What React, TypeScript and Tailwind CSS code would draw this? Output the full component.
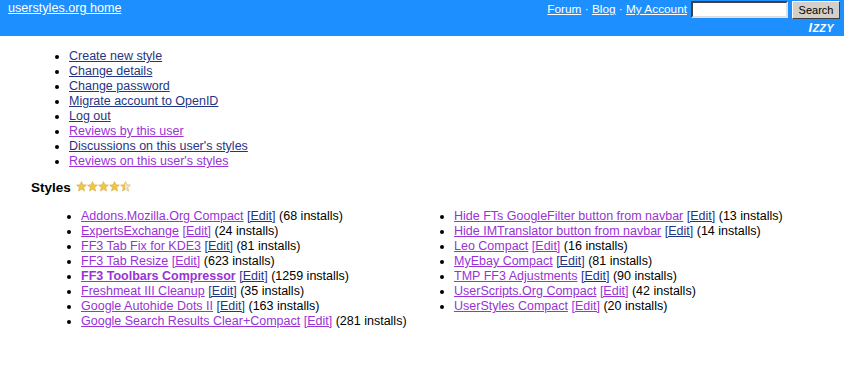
import React from "react";

const navLinks: { label: string; visited?: boolean }[] = [
  { label: "Create new style" },
  { label: "Change details" },
  { label: "Change password" },
  { label: "Migrate account to OpenID" },
  { label: "Log out" },
  { label: "Reviews by this user", visited: true },
  { label: "Discussions on this user's styles" },
  { label: "Reviews on this user's styles", visited: true },
];

type StyleRow = { name: string; installs: number; editVisited?: boolean; bold?: boolean };

const leftStyles: StyleRow[] = [
  { name: "Addons.Mozilla.Org Compact", installs: 68 },
  { name: "ExpertsExchange", installs: 24, editVisited: true },
  { name: "FF3 Tab Fix for KDE3", installs: 81 },
  { name: "FF3 Tab Resize", installs: 623, editVisited: true },
  { name: "FF3 Toolbars Compressor", installs: 1259, bold: true },
  { name: "Freshmeat III Cleanup", installs: 35 },
  { name: "Google Autohide Dots II", installs: 163 },
  { name: "Google Search Results Clear+Compact", installs: 281, editVisited: true },
];

const rightStyles: StyleRow[] = [
  { name: "Hide FTs GoogleFilter button from navbar", installs: 13 },
  { name: "Hide IMTranslator button from navbar", installs: 14 },
  { name: "Leo Compact", installs: 16, editVisited: true },
  { name: "MyEbay Compact", installs: 81 },
  { name: "TMP FF3 Adjustments", installs: 90 },
  { name: "UserScripts.Org Compact", installs: 42, editVisited: true },
  { name: "UserStyles Compact", installs: 20, editVisited: true },
];

const linkCls = "underline text-[#1f3585]";
const visitedCls = "underline text-[#9933d6]";

function Star({ fill }: { fill: number }) {
  const id = `half-${fill}`;
  return (
    <svg width="11" height="11" viewBox="0 0 20 20">
      <defs>
        <linearGradient id={id}>
          <stop offset={`${fill * 100}%`} stopColor="#f2c644" />
          <stop offset={`${fill * 100}%`} stopColor="#ebe7df" />
        </linearGradient>
      </defs>
      <path
        d="M10 1 L12.6 7 L19 7.4 L14 11.6 L15.6 18.4 L10 14.8 L4.4 18.4 L6 11.6 L1 7.4 L7.4 7 Z"
        fill={`url(#${id})`}
        stroke="#cfa845"
        strokeWidth="1"
      />
    </svg>
  );
}

function StyleList({ rows }: { rows: StyleRow[] }) {
  return (
    <ul className="list-disc pl-[24px]">
      {rows.map((r) => (
        <li key={r.name} className="h-[15px] leading-[15px]">
          <a href="#" className={`${visitedCls} ${r.bold ? "font-bold" : ""}`}>
            {r.name}
          </a>{" "}
          <a href="#" className={r.editVisited ? visitedCls : linkCls}>
            [Edit]
          </a>{" "}
          ({r.installs} installs)
        </li>
      ))}
    </ul>
  );
}

export default function App() {
  return (
    <div className="min-h-[371px] w-[844px] bg-white font-['Liberation_Sans',Arial,sans-serif] text-[12.5px] text-black">
      {/* Header bar */}
      <div className="h-[36px] bg-[#1e8ffe] pl-[8px] pr-[4px] text-white">
        <div className="flex items-start justify-between">
          <a href="#" className="pt-[1px] text-[12.6px] leading-[15px] underline">
            userstyles.org home
          </a>
          <div className="flex items-start text-[11.8px] leading-[15px]">
            <div className="pt-[2px]">
              <a href="#" className="underline">Forum</a>
              <span> · </span>
              <a href="#" className="underline">Blog</a>
              <span> · </span>
              <a href="#" className="underline">My Account</a>
            </div>
            <input
              type="text"
              className="ml-[4px] mt-[1px] h-[17px] w-[97px] border-2 border-t-[#404040] border-l-[#404040] border-r-[#e0e0e0] border-b-[#e0e0e0] bg-white"
            />
            <button
              type="button"
              className="ml-[4px] mt-[1px] h-[18px] w-[48px] border border-t-white border-l-white border-r-[#404040] border-b-[#404040] bg-[#d4d0c8] text-[11px] leading-[14px] text-black"
            >
              Search
            </button>
          </div>
        </div>
        <div className="mt-[3px] flex justify-end pr-[6px]">
          <span className="font-bold italic leading-[12px] tracking-[0.5px]">
            <span className="text-[13px]">I</span>
            <span className="text-[10.5px]">ZZY</span>
          </span>
        </div>
      </div>

      {/* Account links */}
      <ul className="mt-[13px] list-disc pl-[69px]">
        {navLinks.map((l) => (
          <li key={l.label} className="h-[15px] leading-[15px]">
            <a href="#" className={l.visited ? visitedCls : linkCls}>
              {l.label}
            </a>
          </li>
        ))}
      </ul>

      {/* Styles heading */}
      <div className="mt-[11px] flex items-center gap-[5px] pl-[31px]">
        <h2 className="text-[13.5px] font-bold leading-[16px]">Styles</h2>
        <div className="flex pb-[3px]">
          <Star fill={1} />
          <Star fill={1} />
          <Star fill={1} />
          <Star fill={1} />
          <Star fill={0.5} />
        </div>
      </div>

      {/* Styles list, two columns */}
      <div className="mt-[13px] flex pl-[57px]">
        <div className="w-[373px]">
          <StyleList rows={leftStyles} />
        </div>
        <div className="w-[373px]">
          <StyleList rows={rightStyles} />
        </div>
      </div>
    </div>
  );
}
